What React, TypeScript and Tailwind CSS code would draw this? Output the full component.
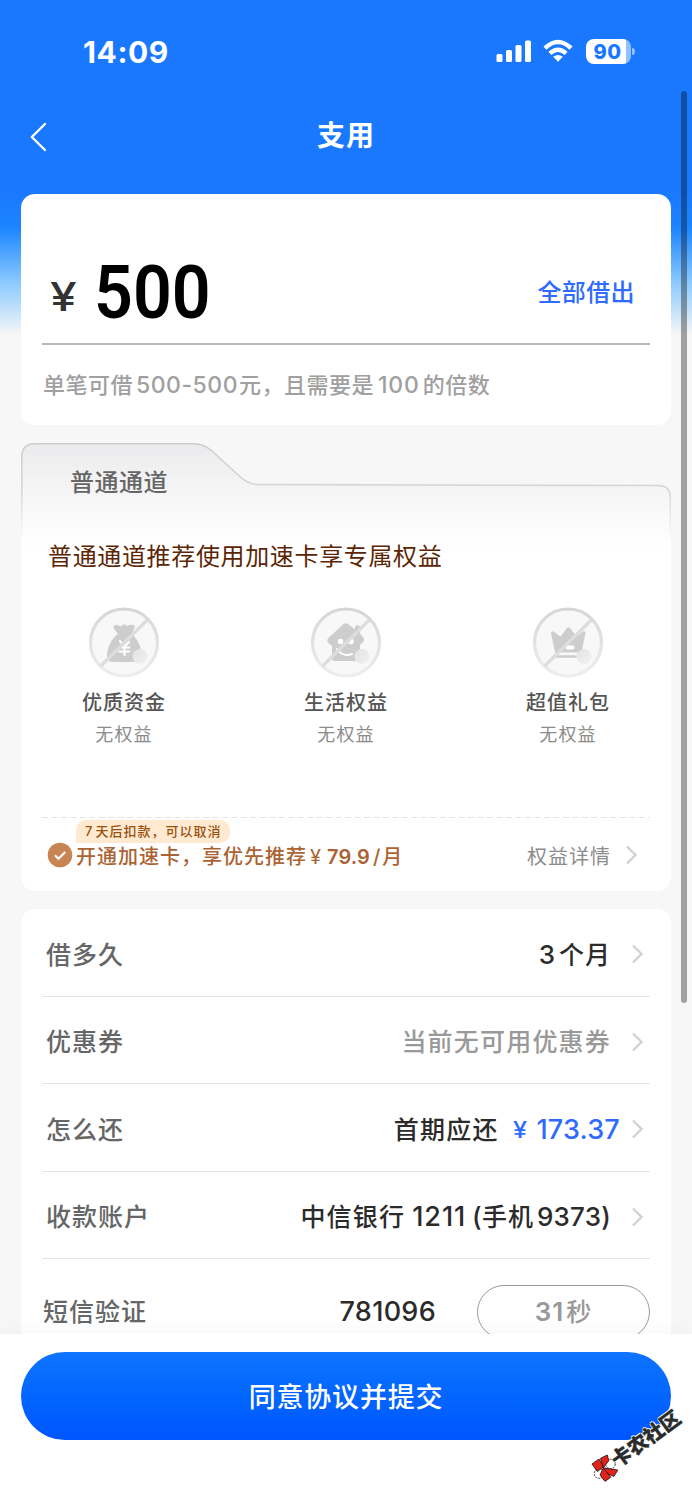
import type { ReactNode } from "react"

// 支用页面：金额输入、通道权益、借款信息、底部提交

function StatusBar() {
  return (
    <div className="flex items-center h-[102px] pl-[83px] pr-[57px] shrink-0 text-white">
      <span className="pt-px text-[30px] leading-[34px] font-bold tracking-[0.6px]">14:09</span>
      <div className="flex items-center ml-auto">
        <svg className="w-9 h-6" viewBox="0 0 36 24" fill="currentColor">
          <rect x="0.5" y="15" width="6" height="8" rx="1.6" />
          <rect x="10" y="11" width="6" height="12" rx="1.6" />
          <rect x="19.5" y="6" width="6" height="17" rx="1.6" />
          <rect x="29" y="1.5" width="6" height="21.5" rx="1.6" />
        </svg>
        <svg className="w-[30px] h-6 ml-[11px]" viewBox="0 0 30 24" fill="none" stroke="currentColor" strokeWidth="4.4">
          <path d="M2 9.2 Q15 -3.2 28 9.2" />
          <path d="M6.9 14.4 Q15 7 23.1 14.4" />
          <path d="M10.2 17.8 Q15 14 19.8 17.8 L15 22.8Z" fill="currentColor" stroke="none" />
        </svg>
        <div className="flex items-center ml-[13px]">
          <div className="flex items-center justify-center w-[45px] h-[25px] pt-px pr-[2px] rounded-[8px] bg-[linear-gradient(90deg,white_40px,#91bfff_40px)]">
            <span className="text-[20px] leading-6 font-extrabold text-[#1a78ff] tracking-[0.5px]">90</span>
          </div>
          <div className="w-[3px] h-[7px] ml-px rounded-r-full bg-[#91bfff]" />
        </div>
      </div>
    </div>
  )
}

function NavBar() {
  return (
    <div className="flex items-center h-[92px] px-[30px] pb-[26px] shrink-0 text-white">
      <svg className="w-[18px] h-8 mt-1" viewBox="0 0 18 32" fill="none" stroke="currentColor" strokeWidth="2.4" strokeLinecap="round" strokeLinejoin="round">
        <path d="M15 3 L1.8 16 L15 29" />
      </svg>
      <h1 className="flex-1 pt-[2px] pr-[18px] text-center text-[28px] leading-10 font-bold tracking-[1px]">支用</h1>
    </div>
  )
}

function Chevron() {
  return (
    <svg className="w-3 h-5 shrink-0" viewBox="0 0 12 20" fill="none" stroke="#d2d2d2" strokeWidth="2.4">
      <path d="M1 1.5 L9.5 10 L1 18.5" />
    </svg>
  )
}

function AmountCard() {
  return (
    <section className="h-[231px] px-[21px] rounded-[14px] bg-white shrink-0">
      <div className="flex items-center h-[151px] pt-[48px] pl-[8px] pr-[15px] border-b-2 border-[#b8b8b8]">
        <span className="pt-[9px] origin-left scale-x-[1.2] text-[40px] leading-[48px] font-medium text-[#333333]">¥</span>
        <span className="ml-[22px] origin-left scale-x-[0.92] font-['Roboto'] text-[74px] leading-[80px] font-semibold text-black">500</span>
        <button className="ml-auto text-[24px] leading-8 font-medium tracking-[0.4px] text-[#2f6bff]">全部借出</button>
      </div>
      <p className="pt-[24px] pl-px text-[22px] leading-8 font-medium tracking-[0.5px] text-[#a0a0a0] whitespace-nowrap">
        单笔可借<span className="ml-[3px] mr-[1px] text-[23px] tracking-[0.5px]">500-500</span>元，且需要是
        <span className="ml-[4px] mr-[3px] text-[23px] tracking-[0.8px]">100</span>的倍数
      </p>
    </section>
  )
}

// 圆形禁用图标外框：圆环 + 斜线 + 右下角圆点
function DisabledIcon({ id, children }: { id: string; children: ReactNode }) {
  return (
    <svg className="size-[72px]" viewBox="0 0 72 72">
      <defs>
        <linearGradient id={`${id}-ring`} x1="0" y1="0" x2="0" y2="1">
          <stop offset="0" stopColor="#d6d6d6" />
          <stop offset="1" stopColor="#ededed" />
        </linearGradient>
        <linearGradient id={`${id}-dot`} x1="0" y1="0" x2="1" y2="1">
          <stop offset="0" stopColor="#e2e2e2" />
          <stop offset="1" stopColor="#f2f2f2" />
        </linearGradient>
      </defs>
      <circle cx="36" cy="36.5" r="33.5" fill="#f8f8f8" stroke={`url(#${id}-ring)`} strokeWidth="3.2" />
      {children}
      <path d="M59.3 14 L12.7 60" stroke="#dddddd" strokeWidth="3.2" />
      <circle cx="52" cy="50.5" r="7.5" fill={`url(#${id}-dot)`} />
    </svg>
  )
}

const benefits = [
  {
    id: "bag",
    label: "优质资金",
    art: (
      <>
        <path
          d="M30 28 L25.5 22 Q25 18.5 29 19 L33 20.5 Q36 17 39 20 Q46 17 47 21 L43.5 28 C50 33 54 42 53 50 Q53 56 48 56 H25 Q19 56 19 51 C19 42 23 33 30 28Z"
          fill="#cdcdcd"
        />
        <path d="M32 35 L36.5 40.5 L41 36 M36.5 41 V49 M31.5 41.5 H41.5 M31.5 45.5 H41.5" stroke="white" strokeWidth="2.2" strokeLinecap="round" fill="none" />
      </>
    ),
  },
  {
    id: "house",
    label: "生活权益",
    art: (
      <>
        <path
          d="M33.5 18 Q35.7 16.3 38 18 L45 23.5 V21 Q47.5 17 50 21 V27.5 L53 31 Q55.5 34 52.5 36.5 L50 39 V52 Q50 55 47 55 H25 Q22 55 22 52 V40 L18.5 37 Q16 34.5 18.5 32Z"
          fill="#cdcdcd"
        />
        <circle cx="30.5" cy="35.5" r="2.8" fill="white" />
        <circle cx="41" cy="35.5" r="2.8" fill="white" />
        <path d="M27 43 Q33 51.5 42 48" stroke="white" strokeWidth="2" strokeLinecap="round" fill="none" />
      </>
    ),
  },
  {
    id: "crown",
    label: "超值礼包",
    art: (
      <>
        <path
          d="M19 27 Q19 24.5 21.5 25.5 L28.5 30.5 L35 22 Q36.5 20.5 38 22 L44.5 30.5 L51 25.5 Q53.5 24.5 53.5 27 L49.5 46.5 H23Z"
          fill="#cdcdcd"
        />
        <rect x="33.5" y="39.5" width="9" height="4" rx="2" fill="white" />
        <path d="M24 50.5 H46" stroke="#cdcdcd" strokeWidth="2.4" strokeLinecap="round" />
      </>
    ),
  },
]

function ChannelCard() {
  return (
    <section className="relative h-[448px] mt-[18px] px-[21px] rounded-[14px] bg-[linear-gradient(transparent_104px,white_104px)] shrink-0">
      {/* 标签页轮廓 */}
      <svg className="absolute left-0 top-0 w-[650px] h-[106px]" viewBox="0 0 650 106" fill="none">
        <defs>
          <linearGradient id="tab-fill" x1="0" y1="0" x2="0" y2="1">
            <stop offset="0" stopColor="#ebebed" />
            <stop offset="0.45" stopColor="#f5f5f6" />
            <stop offset="1" stopColor="#ffffff" />
          </linearGradient>
          <linearGradient id="tab-line" gradientUnits="userSpaceOnUse" x1="0" y1="0" x2="0" y2="100">
            <stop offset="0" stopColor="#cccccc" />
            <stop offset="0.5" stopColor="#d6d6d6" />
            <stop offset="1" stopColor="#ffffff" />
          </linearGradient>
        </defs>
        <path
          d="M0.8 106 V14 Q0.8 0.8 14 0.8 H172 Q183 0.8 191 8 L215 30 Q226 41.5 237 41.5 L637 42.5 Q649.2 42.5 649.2 54 V106"
          fill="url(#tab-fill)"
          stroke="url(#tab-line)"
          strokeWidth="1.5"
        />
      </svg>

      <div className="relative flex flex-col h-full">
        <h2 className="pt-[24px] pl-[28px] text-[24px] leading-8 font-medium tracking-[0.5px] text-[#666666]">普通通道</h2>
        <p className="mt-[42px] pl-[6px] text-[24px] leading-8 tracking-[0.65px] text-[#5c2605] whitespace-nowrap">
          普通通道推荐使用加速卡享专属权益
        </p>

        <div className="flex justify-between mt-[33px] px-[39px]">
          {benefits.map((item) => (
            <div key={item.id} className="flex flex-col items-center w-[86px]">
              <DisabledIcon id={item.id}>{item.art}</DisabledIcon>
              <span className="mt-[11px] text-[20px] leading-7 font-medium tracking-[1px] text-[#555555] whitespace-nowrap">{item.label}</span>
              <span className="mt-[6px] text-[18px] leading-6 tracking-[1.2px] text-[#8c8c8c]">无权益</span>
            </div>
          ))}
        </div>

        <svg className="absolute left-0 top-[374px] w-[608px] h-px" viewBox="0 0 608 1">
          <path d="M0 0.5 H608" stroke="#e4e4e4" strokeDasharray="6 3.47" />
        </svg>

        <div className="flex items-center mt-auto mb-[20px] h-8 pl-[5px] pr-[12px]">
          <svg className="size-[26px]" viewBox="0 0 26 26">
            <circle cx="13" cy="13" r="12.3" fill="#c98453" />
            <path d="M8 13.3 L11.5 16.8 L18.2 10" stroke="white" strokeWidth="2.2" fill="none" />
          </svg>
          <span className="relative flex ml-[3px] pt-[3px] text-[20px] leading-8 font-medium tracking-[1px] text-[#ac6334] whitespace-nowrap">
            <span>开通加速卡，享优先推荐</span>
            <span className="ml-[3px] font-normal">¥</span>
            <span className="ml-[5px] font-semibold tracking-[0.1px]">79.9</span>
            <span className="ml-[3px] mr-[1px]">/</span>
            <span>月</span>
            <span className="absolute left-0 top-[-18px] h-[23px] w-[154px] pl-[9px] rounded-[10px] rounded-bl-none bg-[#ffe9d0] text-[13px] leading-[23px] font-medium tracking-[1px] text-[#99510f]">
              <span className="mr-[2px]">7</span>天后扣款，可以取消
            </span>
          </span>
          <span className="ml-auto mr-[15px] pt-[3px] text-[20px] leading-8 tracking-[1px] text-[#8c8c8c]">权益详情</span>
          <Chevron />
        </div>
      </div>
    </section>
  )
}

function Row({ label, children }: { label: string; children: ReactNode }) {
  return (
    <div className="flex items-center h-[87.5px] pt-[4px] pl-[4px] pr-[6px] border-b-[1.5px] border-[#e4e4e4] text-[25px] leading-9 font-medium tracking-[1px] text-[#2b2b2b] whitespace-nowrap">
      <span className="pt-px text-[#666666]">{label}</span>
      <span className="flex items-center ml-auto mr-[21px] pt-px">{children}</span>
      <Chevron />
    </div>
  )
}

function LoanInfoCard() {
  return (
    <section className="h-[500px] mt-[18px] px-[21px] rounded-[14px] bg-white shrink-0">
      <Row label="借多久">
        <span className="mr-[3px] text-[26px]">3</span>个月
      </Row>
      <Row label="优惠券">
        <span className="tracking-[1.2px] text-[#999999]">当前无可用优惠券</span>
      </Row>
      <Row label="怎么还">
        <span className="tracking-[1.2px]">首期应还</span>
        <span className="ml-[14px] origin-left scale-x-[1.1] text-[23px] text-[#2f6bff]">¥</span>
        <span className="ml-[10px] mr-[-9px] text-[27px] tracking-[0.2px] text-[#2f6bff]">173.37</span>
      </Row>
      <Row label="收款账户">
        <span className="tracking-[1.2px]">中信银行</span>
        <span className="ml-[7px] text-[27px] tracking-[0.9px]">1211</span>
        <span className="ml-[6px] text-[26px] tracking-[0.3px]">(</span>
        <span>手机</span>
        <span className="ml-[3px] text-[26px] tracking-[0.2px]">9373)</span>
      </Row>
      <div className="flex items-center pt-[26px] pl-px text-[25px] leading-9 font-medium tracking-[1px]">
        <span className="text-[#666666]">短信验证</span>
        <span className="ml-auto text-[27px] tracking-[0.3px] text-[#2b2b2b]">781096</span>
        <span className="flex items-center justify-center w-[173px] h-[54px] ml-[41px] rounded-full border border-[#999999] text-[#999999]">
          <span className="mr-[2px] text-[26px] font-semibold">31</span>秒
        </span>
      </div>
    </section>
  )
}

function SubmitBar() {
  return (
    <footer className="relative h-[166px] px-[21px] pt-[18px] bg-white shadow-[0_-2px_20px_rgba(0,0,0,0.04)] shrink-0">
      <button className="w-full h-[88px] pt-[4px] rounded-full bg-linear-to-b from-[#0f74ff] to-[#0055ff] text-white text-[27px] leading-10 font-medium tracking-[0.8px]">
        同意协议并提交
      </button>
    </footer>
  )
}

// 右下角社区水印
function Watermark() {
  return (
    <div className="absolute left-[590px] top-[1410px] w-[98px] h-[74px]">
      <svg className="absolute left-0 top-[43px] size-[30px]" viewBox="0 0 30 30" stroke="#111111" strokeWidth="0.8">
        <circle cx="20.5" cy="11" r="4.8" fill="white" strokeDasharray="2 1" />
        <circle cx="9" cy="20.5" r="4.8" fill="white" strokeDasharray="2 1" />
        <path d="M2 11 L9 6 L14 13.5 L7.3 18.5Z" fill="#e2231a" />
        <path d="M10.5 5.3 L17.3 2 L18.8 7.7 L13.3 14.8Z" fill="#e2231a" />
        <path d="M13.3 14.8 L27.8 17 L23.8 23.5 L16.2 20Z" fill="#e2231a" />
        <path d="M13.3 14.8 L20.8 24.3 L15 28.4 L10 22Z" fill="#e2231a" />
      </svg>
      <span className="absolute left-[15px] top-[15px] w-[82px] rotate-[-36deg] text-center text-[20px] leading-7 font-black text-[#2b2b2b] whitespace-nowrap [-webkit-text-stroke:0.3px_#2b2b2b] [text-shadow:1px_0_white,-1px_0_white,0_1px_white,0_-1px_white]">
        卡农社区
      </span>
    </div>
  )
}

export default function App() {
  return (
    <div className="relative flex flex-col w-[692px] h-[1500px] overflow-hidden bg-[#f7f7f7] font-['Inter','Noto_Sans_CJK_SC',sans-serif]">
      <div className="flex flex-col h-[1334px] overflow-hidden shrink-0 bg-[linear-gradient(#1a78ff_190px,#1c85ff_228px,#8ccaff_283px,#f7f7f7_335px)]">
        <StatusBar />
        <NavBar />
        <main className="flex flex-col px-[21px]">
          <AmountCard />
          <ChannelCard />
          <LoanInfoCard />
        </main>
      </div>
      <SubmitBar />
      <Watermark />
      {/* 滚动条 */}
      <div className="absolute left-[681px] top-[91px] w-[6px] h-[912px] rounded-full bg-black/35" />
    </div>
  )
}
